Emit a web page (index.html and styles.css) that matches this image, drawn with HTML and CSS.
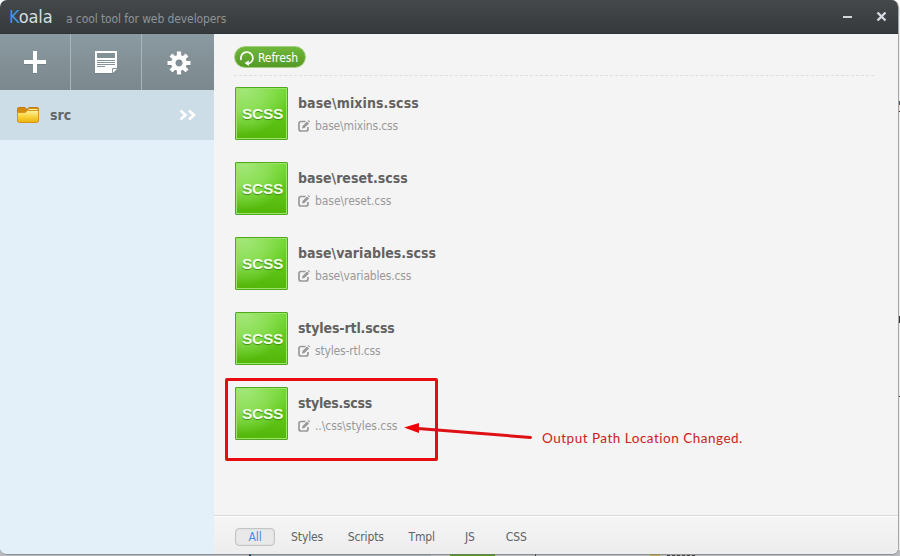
FILE: index.html
```html
<!DOCTYPE html>
<html lang="en">
<head>
<meta charset="utf-8">
<title>Koala</title>
<link rel="stylesheet" href="styles.css">
</head>
<body>
<svg class="defs" width="0" height="0" aria-hidden="true">
  <symbol id="edit" viewBox="0 0 12 12">
    <path d="M7.500 1.500H3Q1 1.500 1 3.500V9Q1 11 3 11H8Q10 11 10 9V7" fill="none" stroke="#999" stroke-width="1.700"/>
    <path d="M4 8.500L4.500 6L9 1.500L11 3.400L6.500 8Z M9.600 .8L10.500 0L12 1.500L11.500 2.500Z" fill="#999"/>
  </symbol>
</svg>
<div class="backdrop">
  <i class="mark m1"></i><i class="mark m2"></i><i class="mark m3"></i>
  <i class="mark b6"></i><i class="mark b1"></i><i class="mark b2"></i><i class="mark b3"></i><i class="mark b4"></i><i class="mark b5"></i>
</div>
<div class="window">
  <header class="titlebar">
    <h1 class="brand"><span class="initial">K</span>oala</h1>
    <p class="tagline">a cool tool for web developers</p>
    <svg class="controls" width="48" height="20" viewBox="0 0 48 20">
      <path d="M0 10H9" stroke="#cfd6dc" stroke-width="2"/>
      <path d="M34.500 5.500L42.500 13.500M42.500 5.500L34.500 13.500" stroke="#d5dbe3" stroke-width="2.400"/>
    </svg>
  </header>
  <div class="body">
    <aside class="sidebar">
      <nav class="tools">
        <div class="tool"><svg width="24" height="24" viewBox="0 0 24 24"><path d="M12 1V23M1 12H23" stroke="#fff" stroke-width="4"/></svg></div>
        <div class="tool"><svg width="24" height="24" viewBox="0 0 24 24"><path d="M1 1H23V18L18 23H1Z" fill="#fff"/><path d="M3 3H21V8H3Z" fill="#839197"/><path d="M3 10.500H21M3 12.500H21M3 14.500H21M3 16.500H11" stroke="#87949a"/><path d="M18.500 23V18.500H23" fill="none" stroke="#87949a"/><path d="M19 23V19H23Z" fill="#fff"/></svg></div>
        <div class="tool gear"><svg width="24" height="24" viewBox="-12 -12 24 24"><g stroke="#fff" stroke-width="4.200"><path d="M0-11.500V-6M0 11.500V6M-11.500 0H-6M11.500 0H6M-8-8L-4.500-4.500M8 8L4.500 4.500M-8 8L-4.500 4.500M8-8L4.500-4.500"/></g><circle r="5.700" fill="none" stroke="#fff" stroke-width="4.400"/></svg></div>
      </nav>
      <div class="project">
        <svg width="24" height="18" viewBox="0 0 24 18">
          <defs><linearGradient id="fold" x2="0" y2="1"><stop stop-color="#fff2a1"/><stop offset=".5" stop-color="#f8d43c"/><stop offset="1" stop-color="#edb20e"/></linearGradient></defs>
          <path d="M1.500 3Q1.500 1.500 3 1.500H9L11 3.500 13 1.500H21Q22.500 1.500 22.500 3V15H1.500Z" fill="#d58a10" stroke="#c47d15"/>
          <path d="M12.500 3.500H21.500" stroke="#fff2a0"/>
          <path d="M1.500 6.500H9L11.500 4.500H22.500V14.500Q22.500 16.500 20.500 16.500H3.500Q1.500 16.500 1.500 14.500Z" fill="url(#fold)" stroke="#d7941a"/>
        </svg>
        <span class="project-name">src</span>
        <svg class="chevrons" width="18" height="12" viewBox="0 0 18 12"><path d="M1.500 1.500L6.500 6L1.500 10.500M10 1.500L15 6L10 10.500" fill="none" stroke="#fff" stroke-width="2.600"/></svg>
      </div>
    </aside>
    <main class="content">
      <section class="files">
        <div class="actions">
          <button class="refresh"><svg width="16" height="16" viewBox="0 0 16 16"><path d="M2.200 10A6 6 0 1 1 9.500 13.800" fill="none" stroke="#fff" stroke-width="1.700"/><path d="M5.500 13L9.800 10.500V16Z" fill="#fff"/></svg><span>Refresh</span></button>
        </div>
        <ul class="list">
          <li class="file"><div class="thumb">SCSS</div><div class="info"><h2 class="f1">base\mixins.scss</h2><p><svg width="12" height="12"><use href="#edit"/></svg>base\mixins.css</p></div></li>
          <li class="file"><div class="thumb">SCSS</div><div class="info"><h2>base\reset.scss</h2><p class="p2"><svg width="12" height="12"><use href="#edit"/></svg>base\reset.css</p></div></li>
          <li class="file"><div class="thumb">SCSS</div><div class="info"><h2>base\variables.scss</h2><p><svg width="12" height="12"><use href="#edit"/></svg>base\variables.css</p></div></li>
          <li class="file"><div class="thumb">SCSS</div><div class="info"><h2 class="f4">styles-rtl.scss</h2><p><svg width="12" height="12"><use href="#edit"/></svg>styles-rtl.css</p></div></li>
          <li class="file"><div class="thumb">SCSS</div><div class="info"><h2 class="f5">styles.scss</h2><p class="p2"><svg width="12" height="12"><use href="#edit"/></svg>..\css\styles.css</p></div></li>
        </ul>
      </section>
      <footer class="filters">
        <span class="filter active">All</span><span class="filter">Styles</span><span class="filter">Scripts</span><span class="filter tmpl">Tmpl</span><span class="filter js">JS</span><span class="filter">CSS</span>
      </footer>
    </main>
  </div>
</div>
<div class="highlight"></div>
<svg class="arrow" width="132" height="20" viewBox="0 0 132 20"><path d="M14 6.500L126.500 15.500" stroke="#de1014" stroke-width="3" stroke-linecap="round"/><path d="M0 5.500L15 1V11Z" fill="#f00005"/></svg>
<div class="note">Output Path Location Changed.</div>
</body>
</html>
```

FILE: styles.css
```css
* { box-sizing: border-box; }
body { margin: 0; width: 900px; height: 556px; overflow: hidden; position: relative; background: #e9e9e9; font-family: "DejaVu Sans Condensed", "Noto Sans", sans-serif; font-stretch: condensed; }
h1, h2, p, ul { margin: 0; padding: 0; font-weight: normal; white-space: nowrap; }
svg { display: block; flex: none; }
.defs { position: absolute; }

.backdrop { position: absolute; inset: 0; background: linear-gradient(#fff 0 7px, #ececec 7px 550px, #b9bbbe 550px); }
.mark { position: absolute; background: #333; }
.m1 { left: 898px; top: 101px; width: 2px; height: 11px; background: linear-gradient(#55576b 4px, #f5d9cb 4px); border-bottom: 1px solid #333; }
.m2 { left: 898px; top: 316px; width: 2px; height: 7px; }
.m3 { left: 898px; top: 396px; width: 2px; height: 1px; }
.b1 { left: 249px; top: 554px; width: 2px; height: 2px; background: #0c3850; }
.b2 { left: 450px; top: 554px; width: 45px; height: 2px; background: #559a1e; }
.b3 { left: 535px; top: 554px; width: 1px; height: 2px; }
.b4 { left: 650px; top: 554px; width: 10px; height: 2px; background: #c4a954; }
.b5 { left: 667px; top: 555px; width: 29px; height: 1px; background: repeating-linear-gradient(90deg, #444 0 3px, #aaa 3px 5px); }
.b6 { left: 251px; top: 554px; width: 180px; height: 2px; background: #a3aeb6; }

.window { position: relative; width: 899px; height: 555px; border-right: 1px solid #a7a7a7; border-bottom: 1px solid rgba(110, 115, 120, .6); border-radius: 7px; overflow: hidden; display: flex; flex-direction: column; background: #f4f4f4 padding-box; }
.titlebar { height: 34px; flex: none; display: flex; padding: 0 7px 0 9px; background: linear-gradient(#45494b, #36393b); border-bottom: 1px solid #303335; }
.brand { font-size: 18px; line-height: 34px; width: 57px; color: #d7dde1; letter-spacing: -.1px; }
.initial { color: #4195ee; }
.tagline { font-size: 12px; line-height: 38px; color: #8d9499; letter-spacing: -.1px; }
.controls { margin: 7px 0 0 auto; }
.body { flex: 1; display: flex; min-height: 0; }

.sidebar { width: 214px; background: #e3f0f9; }
.tools { display: grid; grid-template-columns: 71px 71px 72px; height: 56px; background: linear-gradient(#8b9aa1, #7b888d); }
.tool { display: flex; align-items: center; justify-content: center; border-right: 1px solid #a5b6bd; }
.tool svg { filter: drop-shadow(0 1px 0 #728087); }
.tool:last-child { border: 0; }
.gear { padding: 1px 0 0 1px; }
.project { height: 50px; display: flex; align-items: center; padding: 0 17px 0 16px; background: #ccdde7; }
.project-name { margin-left: 10px; font-size: 14px; font-weight: bold; color: #626668; }
.chevrons { margin-left: auto; }

.content { flex: 1; display: flex; flex-direction: column; min-width: 0; }
.files { flex: 1; padding: 0 24px 0 20px; }
.actions { height: 42px; padding-top: 12px; border-bottom: 1px dashed #dedede; }
.refresh { display: flex; align-items: center; gap: 3px; width: 72px; height: 22px; padding: 1px 0 0 4px; border: 1px solid #a2d080; border-radius: 11px; background: linear-gradient(#70b83c, #559a25); color: #fff; font: 12px "DejaVu Sans Condensed", "Noto Sans", sans-serif; letter-spacing: -.1px; }
.list { list-style: none; padding: 11px 0 0 1px; }
.file { display: flex; height: 75px; gap: 10px; }
.thumb { width: 53px; height: 53px; border: 1px solid #4fa81e; border-radius: 1px; box-shadow: inset 0 0 0 1px #9be668; background: radial-gradient(circle at 15% 0, #a4e77c 0, #8cdf55 35%, transparent 70%), linear-gradient(#6dd92e, #53b609); color: #f2ffe9; font: bold 15.500px/52px "Liberation Sans", sans-serif; text-align: center; padding-left: 2px; text-shadow: 0 1px 1px #438d16; letter-spacing: -.3px; }
.info h2 { font-size: 14px; line-height: 20px; margin-top: 6px; font-weight: bold; color: #626262; }
.info p { display: flex; align-items: center; gap: 5px; font-size: 12px; line-height: 16px; margin-top: 5px; color: #999; letter-spacing: -.16px; }
.info .f1 { letter-spacing: .1px; }
.info .f4 { letter-spacing: -.13px; }
.info .f5 { letter-spacing: -.26px; }
.info .p2 { letter-spacing: -.07px; }
.filters { height: 39px; flex: none; display: flex; align-items: center; padding: 3px 0 0 21px; border-top: 1px solid #d9d9d9; box-shadow: inset 0 1px #fff; background: linear-gradient(#f5f5f5, #ededed); font-size: 12px; letter-spacing: -.1px; color: #606367; }
.filter { height: 18px; line-height: 18px; margin-right: 24.500px; }
.tmpl { margin-right: 30px; }
.js { margin-right: 31px; }
.active { width: 40px; margin-right: 16px; border: 1px solid #c4c4c4; border-radius: 4px; background: #e9e9e9; box-shadow: inset 0 0 2px #ccc; color: #4190e8; line-height: 17px; text-align: center; }

.highlight { position: absolute; left: 225px; top: 378px; width: 213px; height: 83px; border: 3px solid #e60c10; border-radius: 2px; }
.arrow { position: absolute; left: 404px; top: 422px; }
.note { position: absolute; left: 542px; top: 429px; font: 13.500px/18px Lato, sans-serif; letter-spacing: .5px; color: #cd2020; white-space: nowrap; }
```
